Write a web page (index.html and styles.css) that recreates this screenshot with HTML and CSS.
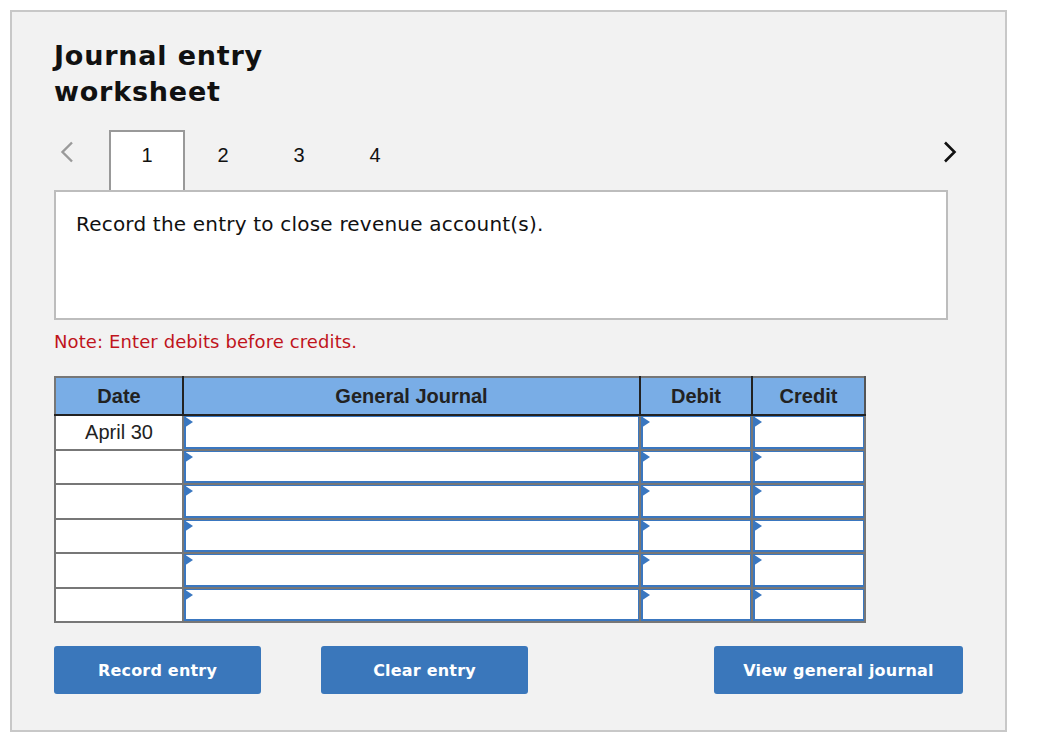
FILE: index.html
```html
<!DOCTYPE html>
<html lang="en">
<head>
<meta charset="UTF-8">
<meta name="viewport" content="width=device-width, initial-scale=1.0">
<title>Journal entry worksheet</title>
<link rel="stylesheet" href="styles.css">
</head>
<body>
<div class="worksheet">
  <h1 class="title">Journal entry<br>worksheet</h1>

  <div class="tabs">
    <span class="nav prev">
      <svg width="14" height="22" viewBox="0 0 14 22"><path d="M12 1.5 L2.5 11 L12 20.5" fill="none" stroke="#9a9a9a" stroke-width="2.4"/></svg>
    </span>
    <span class="tab active">1</span>
    <span class="tab">2</span>
    <span class="tab">3</span>
    <span class="tab">4</span>
    <span class="nav next">
      <svg width="14" height="22" viewBox="0 0 14 22"><path d="M2 1.5 L11.5 11 L2 20.5" fill="none" stroke="#111" stroke-width="2.6"/></svg>
    </span>
  </div>

  <div class="prompt">Record the entry to close revenue account(s).</div>

  <p class="note">Note: Enter debits before credits.</p>

  <table class="journal">
    <colgroup>
      <col class="col-date">
      <col class="col-account">
      <col class="col-debit">
      <col class="col-credit">
    </colgroup>
    <thead>
      <tr>
        <th>Date</th>
        <th>General Journal</th>
        <th>Debit</th>
        <th>Credit</th>
      </tr>
    </thead>
    <tbody>
      <tr>
        <td class="date">April 30</td>
        <td><div class="field"></div></td>
        <td><div class="field"></div></td>
        <td><div class="field"></div></td>
      </tr>
      <tr>
        <td class="date"></td>
        <td><div class="field"></div></td>
        <td><div class="field"></div></td>
        <td><div class="field"></div></td>
      </tr>
      <tr>
        <td class="date"></td>
        <td><div class="field"></div></td>
        <td><div class="field"></div></td>
        <td><div class="field"></div></td>
      </tr>
      <tr>
        <td class="date"></td>
        <td><div class="field"></div></td>
        <td><div class="field"></div></td>
        <td><div class="field"></div></td>
      </tr>
      <tr>
        <td class="date"></td>
        <td><div class="field"></div></td>
        <td><div class="field"></div></td>
        <td><div class="field"></div></td>
      </tr>
      <tr>
        <td class="date"></td>
        <td><div class="field"></div></td>
        <td><div class="field"></div></td>
        <td><div class="field"></div></td>
      </tr>
    </tbody>
  </table>

  <div class="actions">
    <button class="btn">Record entry</button>
    <button class="btn clear">Clear entry</button>
    <button class="btn view">View general journal</button>
  </div>
</div>
</body>
</html>
```

FILE: styles.css
```css
body, html {
  margin: 0;
  background: #fff;
}

body {
  font-family: "DejaVu Sans", Verdana, sans-serif;
  color: #111;
}

.worksheet {
  width: 909px;
  margin: 10px 0 0 10px;
  padding: 26px 42px 36px 42px;
  background: #f2f2f2;
  border: 2px solid #c8c8c8;
}

.title {
  margin: 0 0 20px 0;
  font-size: 27px;
  line-height: 36px;
  font-weight: bold;
  letter-spacing: 0.8px;
  color: #111;
}

/* tab strip */
.tabs {
  display: flex;
  align-items: flex-start;
  height: 60px;
}

.nav {
  display: flex;
  margin-top: 11px;
}

.prev {
  width: 49px;
  padding-left: 6px;
}

.next {
  margin-left: auto;
  padding-right: 6px;
}

.tab {
  box-sizing: border-box;
  width: 76px;
  height: 60px;
  padding-top: 12px;
  text-align: center;
  font-family: "Liberation Sans", Arial, sans-serif;
  font-size: 20px;
  line-height: 22px;
  color: #111;
  border: 2px solid transparent;
  border-bottom: none;
}

.tab.active {
  background: #fff;
  border-color: #999;
}

.prompt {
  box-sizing: border-box;
  width: 894px;
  height: 130px;
  padding: 20px 20px;
  background: #fff;
  border: 2px solid #bdbdbd;
  font-size: 20px;
  line-height: 24px;
  letter-spacing: 0.2px;
  color: #111;
}

.note {
  margin: 11px 0 23px 0;
  font-size: 18px;
  line-height: 22px;
  letter-spacing: 0.1px;
  color: #c0141c;
}

/* journal grid */
.journal {
  width: 812px;
  table-layout: fixed;
  border-collapse: collapse;
  font-family: "Liberation Sans", Arial, sans-serif;
  font-size: 20px;
  color: #222;
}

.col-date { width: 128px; }
.col-account { width: 457px; }
.col-debit { width: 112px; }
.col-credit { width: 113px; }

.journal th {
  height: 36px;
  padding: 0;
  background: #79ade6;
  font-weight: bold;
  border: 2px solid #777;
  border-right-color: #222;
  border-bottom-color: #222;
}

.journal th:last-child {
  border-right-color: #555;
}

.journal td {
  height: 32.5px;
  padding: 0;
  background: #fff;
  border: 2px solid #777;
  vertical-align: top;
}

.journal td.date {
  text-align: center;
  vertical-align: middle;
}

.field {
  position: relative;
  box-sizing: border-box;
  height: 32.5px;
  border-style: solid;
  border-color: #3a77c0;
  border-width: 1px 1px 2px 2px;
}

.field::before {
  content: "";
  position: absolute;
  left: -2px;
  top: -1px;
  border-left: 9px solid #3a77c0;
  border-top: 6px solid transparent;
  border-bottom: 6px solid transparent;
}

/* buttons */
.actions {
  display: flex;
  margin-top: 23px;
}

.btn {
  width: 207px;
  height: 48px;
  padding: 0;
  background: #3a77bb;
  color: #fff;
  border: none;
  border-radius: 3px;
  font-family: "DejaVu Sans", Verdana, sans-serif;
  font-size: 16px;
  font-weight: bold;
  letter-spacing: 0.2px;
}

.btn.clear {
  margin-left: 60px;
}

.btn.view {
  width: 249px;
  margin-left: auto;
}
```
